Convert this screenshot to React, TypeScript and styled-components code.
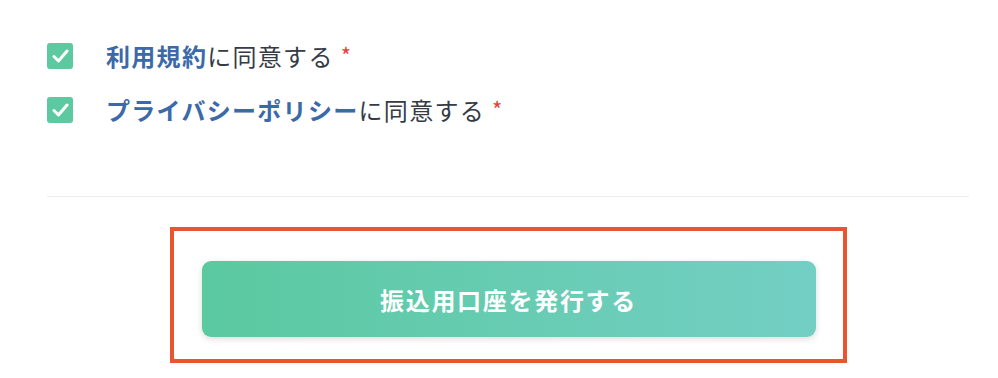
import React from 'react';
import styled, { createGlobalStyle } from 'styled-components';

const GlobalStyle = createGlobalStyle`
  html, body {
    margin: 0;
    padding: 0;
    background: #ffffff;
  }
  body {
    font-family: "Noto Sans CJK JP", "Noto Sans", sans-serif;
    color: #333a44;
  }
`;

const Page = styled.div`
  width: 998px;
  padding: 29px 29px 0 47px;
  box-sizing: border-box;
`;

const CheckList = styled.div`
  display: flex;
  flex-direction: column;
`;

const CheckRow = styled.label`
  display: flex;
  align-items: center;
  height: 54px;
  cursor: pointer;
`;

const Box = styled.span`
  width: 26px;
  height: 26px;
  border-radius: 3px;
  background-color: #5cc9a0;
  display: flex;
  align-items: center;
  justify-content: center;
  flex-shrink: 0;
  margin-right: 33px;
`;

const Label = styled.span`
  font-size: 24px;
  letter-spacing: 1.3px;
  line-height: 1;
  color: #343b46;
  display: flex;
  align-items: flex-start;
`;

const LinkText = styled.a`
  color: #3b69a9;
  font-weight: 600;
  text-decoration: none;
`;

const Required = styled.span`
  color: #e2433a;
  font-size: 22px;
  margin-left: 7px;
  margin-top: -1px;
`;

const Divider = styled.div`
  height: 1px;
  background-color: #eceef1;
  margin-top: 59px;
`;

const Footer = styled.div`
  display: flex;
  justify-content: center;
  margin-top: 30px;
`;

const Highlight = styled.div`
  border: 4px solid #e8552f;
  padding: 30px 27px 22px 28px;
`;

const SubmitButton = styled.button`
  width: 614px;
  height: 76px;
  border: none;
  border-radius: 9px;
  background: linear-gradient(90deg, #5bc9a0 0%, #73cfc4 100%);
  box-shadow: 0 2px 6px rgba(0, 0, 0, 0.14);
  color: #ffffff;
  font-family: "Noto Sans CJK JP", "Noto Sans", sans-serif;
  font-size: 24px;
  font-weight: 600;
  letter-spacing: 1.7px;
  cursor: pointer;
`;

const Check = () => (
  <svg width="17" height="14" viewBox="0 0 17 14" fill="none">
    <path d="M2 7.5 L6.5 12 L15 2" stroke="#ffffff" strokeWidth="3" strokeLinecap="round" strokeLinejoin="round" />
  </svg>
);

const agreements = [
  { link: '利用規約', rest: 'に同意する' },
  { link: 'プライバシーポリシー', rest: 'に同意する' },
];

const App = () => (
  <>
    <GlobalStyle />
    <Page>
      <CheckList>
        {agreements.map((item) => (
          <CheckRow key={item.link}>
            <Box>
              <Check />
            </Box>
            <Label>
              <span>
                <LinkText href="#">{item.link}</LinkText>
                {item.rest}
              </span>
              <Required>*</Required>
            </Label>
          </CheckRow>
        ))}
      </CheckList>
      <Divider />
      <Footer>
        <Highlight>
          <SubmitButton>振込用口座を発行する</SubmitButton>
        </Highlight>
      </Footer>
    </Page>
  </>
);

export default App;
